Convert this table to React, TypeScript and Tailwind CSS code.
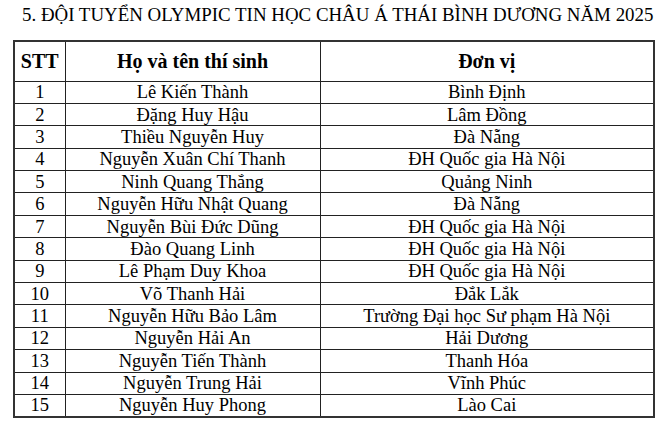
import React from "react";

const rows: [string, string][] = [
  ["Lê Kiến Thành", "Bình Định"],
  ["Đặng Huy Hậu", "Lâm Đồng"],
  ["Thiều Nguyễn Huy", "Đà Nẵng"],
  ["Nguyễn Xuân Chí Thanh", "ĐH Quốc gia Hà Nội"],
  ["Ninh Quang Thắng", "Quảng Ninh"],
  ["Nguyễn Hữu Nhật Quang", "Đà Nẵng"],
  ["Nguyễn Bùi Đức Dũng", "ĐH Quốc gia Hà Nội"],
  ["Đào Quang Linh", "ĐH Quốc gia Hà Nội"],
  ["Lê Phạm Duy Khoa", "ĐH Quốc gia Hà Nội"],
  ["Võ Thanh Hải", "Đắk Lắk"],
  ["Nguyễn Hữu Bảo Lâm", "Trường Đại học Sư phạm Hà Nội"],
  ["Nguyễn Hải An", "Hải Dương"],
  ["Nguyễn Tiến Thành", "Thanh Hóa"],
  ["Nguyễn Trung Hải", "Vĩnh Phúc"],
  ["Nguyễn Huy Phong", "Lào Cai"],
];

export default function App() {
  return (
    <div className="w-[660px] h-[425px] bg-white text-black overflow-hidden font-['Liberation_Serif',serif]">
      <div className="pl-[22px] pt-[3px] h-[40px] text-[18.9px] leading-[24px] whitespace-nowrap">
        5. ĐỘI TUYỂN OLYMPIC TIN HỌC CHÂU Á THÁI BÌNH DƯƠNG NĂM 2025
      </div>
      <table className="ml-[13px] w-[640px] border-collapse border-2 border-[#333] table-fixed">
        <colgroup>
          <col className="w-[51px]" />
          <col className="w-[255px]" />
          <col className="w-[334px]" />
        </colgroup>
        <thead>
          <tr className="h-[40px]">
            <th className="border border-[#222] text-[20px] font-bold text-center p-0">STT</th>
            <th className="border border-[#222] text-[20px] font-bold text-center p-0">Họ và tên thí sinh</th>
            <th className="border border-[#222] text-[20px] font-bold text-center p-0">Đơn vị</th>
          </tr>
        </thead>
        <tbody>
          {rows.map(([name, unit], i) => (
            <tr key={i} className="h-[22.4px]">
              <td className="border border-[#222] text-[18.5px] leading-[20px] text-center p-0">{i + 1}</td>
              <td className="border border-[#222] text-[18.5px] leading-[20px] text-center p-0">{name}</td>
              <td className="border border-[#222] text-[18.5px] leading-[20px] text-center p-0">{unit}</td>
            </tr>
          ))}
        </tbody>
      </table>
    </div>
  );
}
